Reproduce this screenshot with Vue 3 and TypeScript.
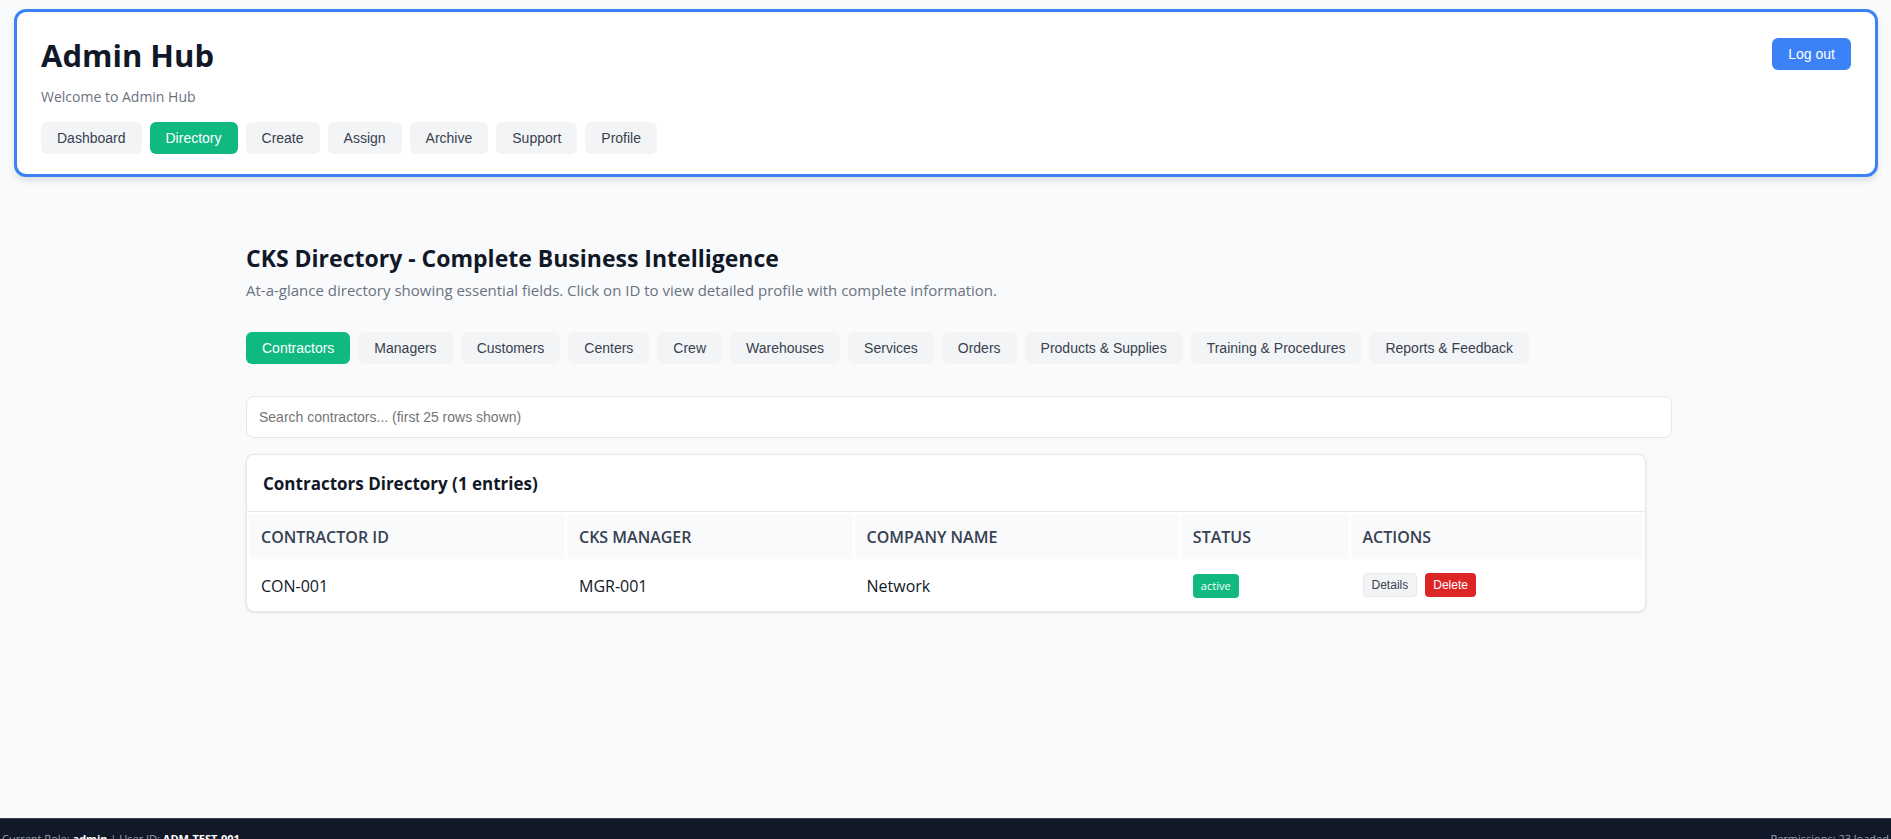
<script setup lang="ts">
import { computed, ref } from 'vue'

interface Contractor {
  id: string
  manager: string
  company: string
  status: string
}

const sections: string[] = ['Dashboard', 'Directory', 'Create', 'Assign', 'Archive', 'Support', 'Profile']
const tabs: string[] = [
  'Contractors',
  'Managers',
  'Customers',
  'Centers',
  'Crew',
  'Warehouses',
  'Services',
  'Orders',
  'Products & Supplies',
  'Training & Procedures',
  'Reports & Feedback',
]

const activeSection = ref('Directory')
const activeTab = ref('Contractors')
const query = ref('')

const contractors = ref<Contractor[]>([
  { id: 'CON-001', manager: 'MGR-001', company: 'Network', status: 'active' },
])

const rows = computed(() => {
  const q = query.value.trim().toLowerCase()
  return contractors.value
    .filter((c) => !q || Object.values(c).some((v) => v.toLowerCase().includes(q)))
    .slice(0, 25)
})

function remove(id: string): void {
  contractors.value = contractors.value.filter((c) => c.id !== id)
}
</script>

<template>
  <div class="page">
    <header class="hub">
      <div class="hub-top">
        <h1>Admin Hub</h1>
        <button type="button" class="btn logout">Log out</button>
      </div>
      <p class="welcome">Welcome to Admin Hub</p>
      <nav class="tabs" aria-label="Sections">
        <button
          v-for="s in sections"
          :key="s"
          type="button"
          class="btn"
          :class="{ active: s === activeSection }"
          @click="activeSection = s"
        >{{ s }}</button>
      </nav>
    </header>

    <main class="content">
      <h2>CKS Directory - Complete Business Intelligence</h2>
      <p class="intro">At-a-glance directory showing essential fields. Click on ID to view detailed profile with complete information.</p>

      <nav class="tabs" aria-label="Directory">
        <button
          v-for="t in tabs"
          :key="t"
          type="button"
          class="btn"
          :class="{ active: t === activeTab }"
          @click="activeTab = t"
        >{{ t }}</button>
      </nav>

      <input
        v-model="query"
        class="search"
        type="text"
        aria-label="Search contractors"
        placeholder="Search contractors... (first 25 rows shown)"
      />

      <section class="card">
        <h3>Contractors Directory ({{ rows.length }} entries)</h3>
        <table>
          <colgroup>
            <col class="c-id" />
            <col class="c-manager" />
            <col class="c-company" />
            <col class="c-status" />
            <col class="c-actions" />
          </colgroup>
          <thead>
            <tr>
              <th scope="col">CONTRACTOR ID</th>
              <th scope="col">CKS MANAGER</th>
              <th scope="col">COMPANY NAME</th>
              <th scope="col">STATUS</th>
              <th scope="col">ACTIONS</th>
            </tr>
          </thead>
          <tbody>
            <tr v-for="c in rows" :key="c.id">
              <td>{{ c.id }}</td>
              <td>{{ c.manager }}</td>
              <td>{{ c.company }}</td>
              <td><span class="badge">{{ c.status }}</span></td>
              <td class="actions-cell">
                <div class="actions">
                  <button type="button" class="small details">Details</button>
                  <button type="button" class="small delete" @click="remove(c.id)">Delete</button>
                </div>
              </td>
            </tr>
          </tbody>
        </table>
      </section>
    </main>

    <footer class="status-bar">
      <span>Current Role: <strong>admin</strong> | User ID: <strong>ADM-TEST-001</strong></span>
      <span>Permissions: 23 loaded</span>
    </footer>
  </div>
</template>

<style>
body {
  margin: 0;
  background: #f9fafb;
}
</style>

<style scoped>
.page {
  display: flex;
  flex-direction: column;
  min-height: calc(100vh + 20px);
  font-family: "Segoe UI", "Open Sans", "Noto Sans", sans-serif;
  font-size: 16px;
  line-height: 21px;
  color: #111827;
  background: #f9fafb;
}

h1,
h2,
h3,
p {
  margin: 0;
}

.hub {
  margin: 9px 13px 0 14px;
  padding: 20px 24px;
  border: 3px solid #3b82f6;
  border-radius: 12px;
  background: #fff;
  box-shadow: 0 4px 6px rgba(0, 0, 0, 0.1);
}

.hub-top {
  display: flex;
  align-items: flex-start;
  justify-content: space-between;
}

h1 {
  font-size: 31px;
  line-height: 46px;
}

.welcome {
  margin: 9px 0 16px;
  font-size: 14px;
  line-height: 19px;
  color: #6b7280;
}

.tabs {
  display: flex;
  flex-wrap: wrap;
  gap: 8px;
}

.btn {
  padding: 8px 16px;
  border: none;
  border-radius: 6px;
  background: #f3f4f6;
  color: #374151;
  font: 14px/16px "Liberation Sans", Arial, sans-serif;
  cursor: pointer;
}

.btn.active {
  background: #10b981;
  color: #fff;
}

.btn.logout {
  margin-top: 6px;
  background: #3b82f6;
  color: #fff;
}

.content {
  flex: 1;
  box-sizing: border-box;
  width: 100%;
  max-width: 1401px;
  margin: 0 auto;
  padding: 65px 0 64px 1px;
}

h2 {
  font-size: 23px;
  line-height: 32px;
}

.intro {
  margin: 6px 0 31px;
  font-size: 15px;
  color: #6b7280;
}

.search {
  width: 100%;
  height: 16px;
  margin: 32px 0 16px;
  padding: 12px;
  border: 1px solid #e5e7eb;
  border-radius: 8px;
  background: #fff;
  color: #111827;
  font: 14px/16px "Liberation Sans", Arial, sans-serif;
}

.search::placeholder {
  color: #757575;
}

.card {
  overflow: hidden;
  border: 1px solid #e5e7eb;
  border-radius: 8px;
  background: #fff;
  box-shadow: 0 1px 3px rgba(0, 0, 0, 0.1);
}

h3 {
  padding: 17px 16px 15px;
  border-bottom: 1px solid #e5e7eb;
  font-size: 17px;
  font-weight: 700;
  line-height: 24px;
}

table {
  width: 100%;
  table-layout: fixed;
  border-collapse: separate;
  border-spacing: 2px;
}

.c-id { width: 22.8%; }
.c-manager { width: 20.6%; }
.c-company { width: 23.4%; }
.c-status { width: 12.1%; }
.c-actions { width: 21.1%; }

th,
td {
  padding: 13px 12px 11px;
  text-align: left;
}

.actions-cell {
  padding: 12px;
}

th {
  background: #f9fafb;
  color: #374151;
  font-weight: 600;
}

.badge {
  display: inline-block;
  padding: 4px 8px;
  border-radius: 4px;
  background: #10b981;
  color: #fff;
  font-size: 11px;
  line-height: 16px;
}

.actions {
  display: flex;
  gap: 8px;
}

.small {
  padding: 4px 8px;
  border: none;
  border-radius: 4px;
  font: 12px/14px "Liberation Sans", Arial, sans-serif;
  cursor: pointer;
}

.details {
  border: 1px solid #e5e7eb;
  background: #f3f4f6;
  color: #374151;
}

.delete {
  background: #dc2626;
  color: #fff;
}

.status-bar {
  display: flex;
  justify-content: space-between;
  padding: 12px 2px;
  border-top: 1px solid #374151;
  background: #111827;
  color: #9ca3af;
  font-size: 11px;
  line-height: 16px;
}

.status-bar strong {
  color: #fff;
}
</style>
